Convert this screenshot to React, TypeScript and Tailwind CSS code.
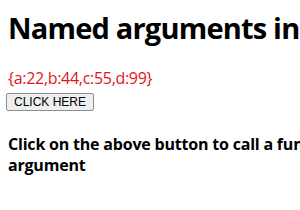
export default function App() {
  const handleClick = () => {
    // nothing to do in the picture
  };

  return (
    <div className="w-[300px] h-[210px] overflow-hidden bg-white text-black font-['Open_Sans',sans-serif]">
      <div className="w-[560px] pl-2">
        <h1 className="pt-[8px] text-[29px] leading-[40px] font-bold tracking-[-0.8px]">
          Named arguments in JavaScript
        </h1>
        <p className="mt-[20px] text-[16px] leading-[20px] tracking-[-0.3px] text-[#e0151b]">
          {"{a:22,b:44,c:55,d:99}"}
        </p>
        <button
          onClick={handleClick}
          className="-ml-[2px] -mt-[1px] h-[18px] px-[7px] border border-[#8f8f8f] rounded-[2px] bg-[#efefef] text-[12px] leading-[16px] text-black font-['Liberation_Sans',sans-serif]"
        >
          CLICK HERE
        </button>
        <h4 className="mt-[22px] w-[470px] text-[16px] leading-[21px] font-bold tracking-[-0.2px]">
          Click on the above button to call a function with named argument
        </h4>
      </div>
    </div>
  );
}
